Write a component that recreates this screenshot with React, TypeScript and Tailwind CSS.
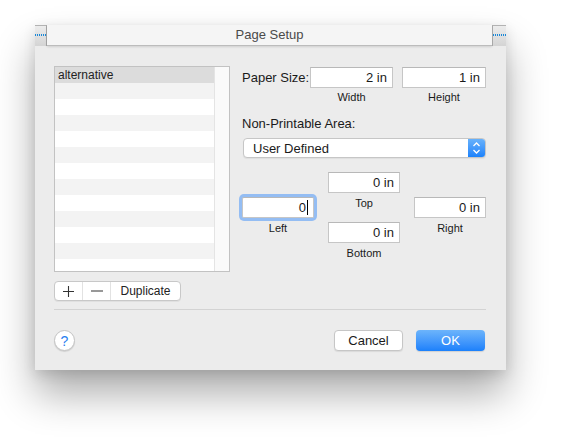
import React from "react";

const rows = Array.from({ length: 12 });

function Field({ value, w, focused }: { value: string; w: string; focused?: boolean }) {
  return (
    <div
      className={`${w} h-[21px] bg-white border border-[#c6c6c6] border-t-[#b8b8b8] flex items-center justify-end pr-[5px] text-[13px] text-[#1a1a1a] leading-none ${
        focused ? "ring-[3px] ring-[#94bdf3] rounded-[2px] border-[#8fb3e8]" : ""
      }`}
    >
      <span>{value}</span>
      {focused && <span className="ml-[1px] w-[1px] h-[15px] bg-black" />}
    </div>
  );
}

function Dots({ w }: { w: number }) {
  return (
    <svg width={w} height="2" viewBox={`0 0 ${w} 2`} className="block">
      <line x1="0" y1="1" x2={w} y2="1" stroke="#1a88d8" strokeWidth="2" strokeDasharray="1 1" />
    </svg>
  );
}

export default function App() {
  return (
    <div
      className="w-[571px] h-[445px] bg-white pt-[25px] pl-[35px] overflow-hidden"
      style={{ fontFamily: '"Liberation Sans", Arial, sans-serif' }}
    >
      <div className="w-[471px] h-[345px] bg-[#ececec] shadow-[0_24px_38px_rgba(0,0,0,0.32),0_4px_12px_rgba(0,0,0,0.12)] flex flex-col">
        {/* title strip */}
        <div className="flex h-[21px]">
          <div className="w-[12px] h-full border-t border-[#b2b2b2] bg-gradient-to-b from-[#ececec] to-[#d4d4d4] border-r border-r-[#a8a8a8] pt-[8px]">
            <Dots w={11} />
          </div>
          <div className="flex-1 h-full bg-[#f5f5f5] border-b border-[#bcbcbc] shadow-[0_1px_2px_rgba(0,0,0,0.12)] flex items-center justify-center text-[13px] text-[#4a4a4a]">
            Page Setup
          </div>
          <div className="w-[14px] h-full border-t border-[#b2b2b2] bg-gradient-to-b from-[#ececec] to-[#d4d4d4] border-l border-l-[#a8a8a8] pt-[8px]">
            <Dots w={13} />
          </div>
        </div>

        {/* main */}
        <div className="flex pl-[19px] pr-[20px] pt-[20px]">
          {/* left column */}
          <div className="flex flex-col w-[176px]">
            <div className="h-[206px] border border-[#c2c2c2] flex bg-white overflow-hidden">
              <div className="flex-1 flex flex-col">
                <div className="h-[16px] shrink-0 bg-[#dcdcdc] text-[12px] text-[#222] pl-[3px] flex items-center leading-none">
                  alternative
                </div>
                {rows.map((_, i) => (
                  <div
                    key={i}
                    className={`h-[16px] shrink-0 ${i % 2 === 0 ? "bg-[#f3f3f3]" : "bg-white"}`}
                  />
                ))}
              </div>
              <div className="w-[15px] bg-[#fafafa] border-l border-[#e4e4e4]" />
            </div>
            <div className="mt-[9px] flex h-[20px] w-[127px] bg-white border border-[#c8c8c8] rounded-[4px] shadow-[0_1px_0_rgba(0,0,0,0.05)] text-[12px] text-[#222] overflow-hidden">
              <div className="w-[28px] flex items-center justify-center border-r border-[#e2e2e2]">
                <svg width="11" height="11" viewBox="0 0 11 11">
                  <path d="M5.5 0v11M0 5.5h11" stroke="#333" strokeWidth="1.1" />
                </svg>
              </div>
              <div className="w-[28px] flex items-center justify-center border-r border-[#e2e2e2]">
                <svg width="12" height="2" viewBox="0 0 12 2">
                  <path d="M0 1h12" stroke="#333" strokeWidth="1.1" />
                </svg>
              </div>
              <div className="flex-1 flex items-center justify-center leading-none">Duplicate</div>
            </div>
          </div>

          {/* right column */}
          <div className="ml-[12px] flex flex-col w-[244px] text-[13px] text-[#1a1a1a]">
            <div className="flex items-center h-[21px] mt-[1px]">
              <div className="w-[68px]">Paper Size:</div>
              <Field value="2 in" w="w-[83px]" />
              <div className="w-[9px]" />
              <Field value="1 in" w="w-[84px]" />
            </div>
            <div className="flex h-[14px] mt-[2px] text-[11px] leading-none items-center">
              <div className="w-[68px]" />
              <div className="w-[83px] text-center">Width</div>
              <div className="w-[9px]" />
              <div className="w-[84px] text-center">Height</div>
            </div>
            <div className="mt-[11px] h-[16px] leading-none flex items-center">Non-Printable Area:</div>
            <div className="mt-[7px] ml-[1px] h-[20px] flex bg-white border border-[#c6c6c6] rounded-[4px] shadow-[0_1px_1px_rgba(0,0,0,0.06)] overflow-hidden">
              <div className="flex-1 flex items-center pl-[9px] leading-none">User Defined</div>
              <div className="w-[17px] bg-gradient-to-b from-[#67b1fb] to-[#1a82fb] flex items-center justify-center">
                <svg width="9" height="14" viewBox="0 0 9 14">
                  <path d="M1.5 5L4.5 2L7.5 5M1.5 9L4.5 12L7.5 9" stroke="white" strokeWidth="1.3" fill="none" />
                </svg>
              </div>
            </div>

            {/* margins */}
            <div className="mt-[14px] flex items-center gap-[14px]">
              <div className="flex flex-col items-center">
                <Field value="0" w="w-[72px]" focused />
                <div className="mt-[3px] h-[14px] text-[11px] leading-none flex items-center">Left</div>
              </div>
              <div className="flex flex-col items-center">
                <Field value="0 in" w="w-[72px]" />
                <div className="mt-[3px] h-[14px] text-[11px] leading-none flex items-center">Top</div>
                <div className="h-[12px]" />
                <Field value="0 in" w="w-[72px]" />
                <div className="mt-[3px] h-[14px] text-[11px] leading-none flex items-center">Bottom</div>
              </div>
              <div className="flex flex-col items-center">
                <Field value="0 in" w="w-[72px]" />
                <div className="mt-[3px] h-[14px] text-[11px] leading-none flex items-center">Right</div>
              </div>
            </div>
          </div>
        </div>

        {/* separator */}
        <div className="ml-[19px] mr-[20px] mt-[8px] border-t border-[#d3d3d3]" />

        {/* footer */}
        <div className="flex items-center pl-[19px] pr-[21px] mt-[20px]">
          <div className="w-[21px] h-[21px] rounded-full bg-white border border-[#c4c4c4] shadow-[0_1px_1px_rgba(0,0,0,0.12)] flex items-center justify-center text-[14px] text-[#2a7ff0] leading-none">
            ?
          </div>
          <div className="flex-1" />
          <div className="w-[69px] h-[21px] bg-white border border-[#c6c6c6] rounded-[4px] shadow-[0_1px_1px_rgba(0,0,0,0.08)] flex items-center justify-center text-[13px] text-[#1a1a1a] leading-none">
            Cancel
          </div>
          <div className="w-[13px]" />
          <div className="w-[69px] h-[21px] rounded-[4px] bg-gradient-to-b from-[#6cb4fb] to-[#1a80fb] shadow-[0_1px_1px_rgba(0,0,0,0.12)] flex items-center justify-center text-[13px] text-white leading-none">
            OK
          </div>
        </div>
      </div>
    </div>
  );
}
